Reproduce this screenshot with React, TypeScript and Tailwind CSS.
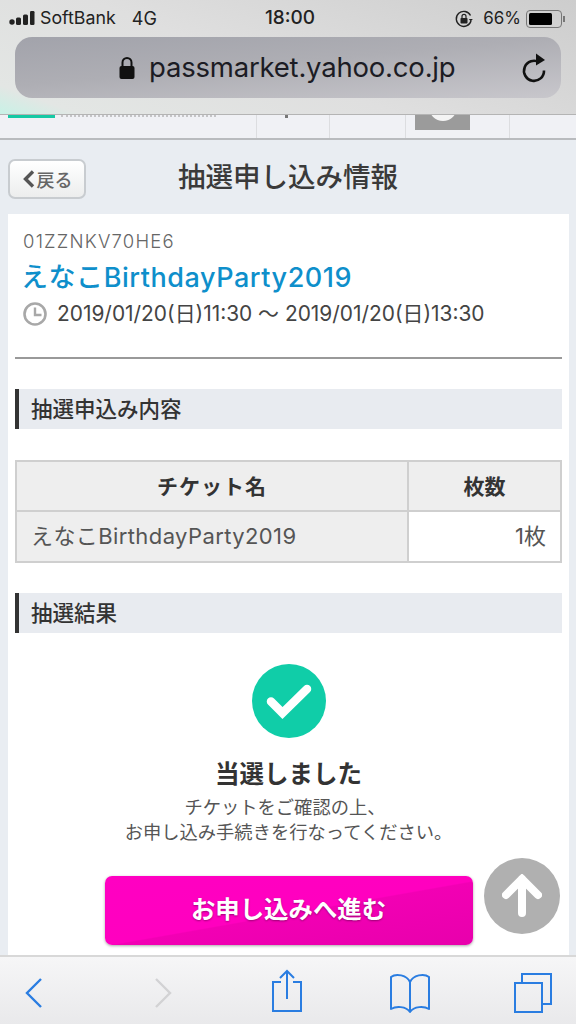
import React from "react";

const jp = "font-['Noto_Sans_CJK_JP','Noto_Sans',sans-serif]";
const latin = "font-['Inter','Noto_Sans_CJK_JP',sans-serif]";

function Section({ title }: { title: string }) {
  return (
    <div className="h-10 bg-[#e8ebf0] border-l-4 border-[#333] flex items-center pl-[12px] pb-[3px] text-[21.5px] font-medium text-[#333] leading-none">
      {title}
    </div>
  );
}

export default function App() {
  return (
    <div className={`${jp} relative w-[576px] h-[1024px] overflow-hidden flex flex-col bg-[#e9edf2]`}>
      {/* Browser top bar */}
      <div className="h-[115px] shrink-0 flex flex-col border-b border-[#b4b4b4] bg-[linear-gradient(20deg,#c8f2e6_0%,#e3e6e4_9%,#dfdfdf_45%,#cdcdcd_100%)]">
        <div className="h-[37px] flex items-center pl-[9px] pr-[11px] text-[#222] font-['Inter',sans-serif] shrink-0">
          <div className="flex items-center flex-1">
            <svg width="26" height="18" viewBox="0 0 26 18" className="mr-[5px]">
              <circle cx="3" cy="12" r="2.7" fill="#222" />
              <rect x="7" y="7.5" width="5" height="7.5" rx="1.5" fill="#222" />
              <rect x="14" y="4.5" width="5" height="10.5" rx="1.5" fill="#222" />
              <rect x="21" y="1" width="4.5" height="14" rx="1.2" fill="#222" />
            </svg>
            <span className="text-[17.8px]">SoftBank</span>
            <span className="ml-[16px] text-[18px]">4G</span>
          </div>
          <div className="font-medium text-[19px] ml-[6px]">18:00</div>
          <div className="flex items-center flex-1 justify-end">
            <svg width="20" height="20" viewBox="0 0 20 20" className="mr-[9px]">
              <path d="M16.5 6.5A7.5 7.5 0 1 0 17 12" fill="none" stroke="#222" strokeWidth="1.4" />
              <path d="M14.8 10h4l-2 2.4z" fill="#222" />
              <rect x="6.5" y="9" width="7" height="5.5" rx="0.8" fill="#222" />
              <path d="M8 9V7.4a2 2 0 0 1 4 0V9" fill="none" stroke="#222" strokeWidth="1.2" />
            </svg>
            <span className="text-[17px] mr-[5px]">66%</span>
            <div className="w-[36px] h-[18px] rounded-[4px] border border-[#777] p-[2px] flex">
              <div className="w-[23px] bg-black rounded-[1.5px]" />
            </div>
            <div className="w-[2px] h-[6px] bg-[#777] ml-[1px]" />
          </div>
        </div>
        <div className="mx-[15px] h-[61px] rounded-[17px] bg-[linear-gradient(175deg,#a2a3ab_0%,#aeaeb4_45%,#c8c7cc_100%)] flex items-center relative">
          <div className="flex items-center ml-[103px]">
            <svg width="18" height="24" viewBox="0 0 18 24" className="mr-[13px]">
              <rect x="1.5" y="10" width="15" height="13" rx="2" fill="#111" />
              <path d="M4.5 11V6.5a4.5 4.5 0 0 1 9 0V11" fill="none" stroke="#111" strokeWidth="2" />
            </svg>
            <span className="text-[27.5px] text-[#1c1c24] font-['Inter',sans-serif] tracking-[-0.2px] leading-none">passmarket.yahoo.co.jp</span>
          </div>
          <svg width="26" height="32" viewBox="0 0 26 32" className="absolute right-[14px] top-[15px]">
            <path d="M18.5 10.5A10 10 0 1 0 23 18.5" fill="none" stroke="#111" strokeWidth="2.6" />
            <path d="M15 1.5 24 8l-9 5.5z" fill="#111" />
          </svg>
        </div>
      </div>

      {/* Scrolled-away site header */}
      <div className="h-[25px] shrink-0 flex bg-[#f0f1f5] border-b-2 border-[#b9bbbe]">
        <div className="w-[257px] border-r border-[#dcdde0] flex items-start pl-2 gap-[6px]">
          <div className="w-[47px] h-[3px] bg-[#15c9a4]" />
          <div className="w-[155px] h-[2px] border-t-2 border-dotted border-[#c4c4c6]" />
        </div>
        <div className="w-[73px] border-r border-[#dcdde0] flex justify-center">
          <div className="w-[3px] h-[3px] bg-[#777] -ml-[14px]" />
        </div>
        <div className="w-[76px] border-r border-[#dcdde0]" />
        <div className="w-[104px] border-r border-[#dcdde0] pl-[9px]">
          <div className="w-[55px] h-[15px] bg-[#9b9b9b] flex justify-center overflow-hidden">
            <div className="w-[28px] h-[28px] rounded-full bg-[#f4f4f4] -mt-[22px]" />
          </div>
        </div>
      </div>

      {/* Page title */}
      <div className="h-[74px] shrink-0 relative flex items-center justify-center">
        <button className="absolute left-2 top-[19px] w-[78px] h-[40px] rounded-[7px] border-2 border-[#c8ccd0] bg-[linear-gradient(#ffffff,#eceded)] flex items-center justify-center text-[#666] text-[18px] font-medium">
          <svg width="14" height="20" viewBox="0 0 14 20" className="mr-[1px]">
            <path d="M11 2.5 3.5 10l7.5 7.5" fill="none" stroke="#555" strokeWidth="3.4" />
          </svg>
          戻る
        </button>
        <h1 className="text-[27.5px] font-medium text-[#3a3a3a] -mt-[3px] leading-none">抽選申し込み情報</h1>
      </div>

      {/* Card */}
      <div className="mx-2 w-[561px] flex-1 min-h-0 bg-white px-[7px] pt-[15px] overflow-hidden">
        <div className={`${latin} px-2 text-[18.5px] leading-6 text-[#666] tracking-[1.2px] font-light`}>01ZZNKV70HE6</div>
        <div className={`${latin} pl-[6px] mt-[8px] text-[27px] leading-[34px] text-[#0e8fcb] font-medium tracking-[0.55px] whitespace-nowrap`}>えなこBirthdayParty2019</div>
        <div className={`${latin} px-2 mt-[5px] flex items-center text-[20.9px] leading-7 text-[#444]`}>
          <svg width="24" height="24" viewBox="0 0 24 24" className="mr-[10px] shrink-0">
            <circle cx="12" cy="12" r="10.5" fill="none" stroke="#a8a8a8" strokeWidth="2.6" />
            <path d="M12 5.5V13h6.5" fill="none" stroke="#a8a8a8" strokeWidth="2.4" />
          </svg>
          <span className="whitespace-nowrap">2019/01/20(日)11:30 ～ 2019/01/20(日)13:30</span>
        </div>
        <div className="mt-[29px] h-[2px] bg-[#999]" />
        <div className="mt-[30px]">
          <Section title="抽選申込み内容" />
        </div>
        <table className="mt-[31px] w-full border-collapse border-2 border-[#cfcfcf] text-[21px] table-fixed">
          <tbody>
            <tr className="h-[50px]">
              <th className="w-[392px] bg-[#eeeeee] border-2 border-[#cfcfcf] font-bold text-[#333] tracking-[1px]">チケット名</th>
              <th className="bg-[#eeeeee] border-2 border-[#cfcfcf] font-bold text-[#333]">枚数</th>
            </tr>
            <tr className="h-[51px]">
              <td className={`${latin} bg-[#eeeeee] border-2 border-[#cfcfcf] pl-[14px] text-[22px] tracking-[0.4px] text-[#555]`}>えなこBirthdayParty2019</td>
              <td className={`${latin} bg-white border-2 border-[#cfcfcf] pr-[14px] text-right text-[22px] text-[#555]`}>1枚</td>
            </tr>
          </tbody>
        </table>
        <div className="mt-[30px]">
          <Section title="抽選結果" />
        </div>
        <div className="flex flex-col items-center mt-[31px]">
          <div className="w-[74px] h-[74px] rounded-full bg-[#10cda8] flex items-center justify-center">
            <svg width="48" height="38" viewBox="0 0 48 38">
              <path d="M6 19.5 17.5 31 42 7" fill="none" stroke="#fff" strokeWidth="8.5" strokeLinecap="round" strokeLinejoin="miter" />
            </svg>
          </div>
          <div className="mt-[18px] text-[24.5px] leading-[34px] font-bold text-[#333]">当選しました</div>
          <div className="mt-[4px] text-[18.3px] leading-[25px] text-[#555] text-center whitespace-nowrap">
            <div className="pr-[7px]">チケットをご確認の上、</div>
            <div>お申し込み手続きを行なってください。</div>
          </div>
          <button className="mt-[32px] w-[368px] h-[69px] rounded-[7px] bg-[linear-gradient(170deg,#ff00c2_0%,#ff00bf_52%,#f200b4_53%,#e800ac_100%)] shadow-[0_1px_3px_rgba(0,0,0,0.35)] text-white text-[24.4px] font-bold pb-[4px] [text-shadow:0_1px_2px_rgba(0,0,0,0.35)]">
            お申し込みへ進む
          </button>
        </div>
      </div>

      {/* Back to top floating button */}
      <div className="absolute left-[484px] top-[858px] w-[76px] h-[76px] rounded-full bg-[#b0b0b0] flex items-center justify-center">
        <svg width="40" height="44" viewBox="0 0 40 44">
          <path d="M20 5V39M4 21 20 5l16 16" fill="none" stroke="#fff" strokeWidth="8" strokeLinecap="round" strokeLinejoin="miter" />
        </svg>
      </div>

      {/* Bottom toolbar */}
      <div className="h-[69px] shrink-0 bg-[linear-gradient(#f6f6f7,#e9e9eb)] border-t-2 border-[#d8d8d8] flex items-center relative">
        <svg width="20" height="32" viewBox="0 0 20 32" className="absolute left-[24px] top-[20px]">
          <path d="M17 2 3 16l14 14" fill="none" stroke="#2a7de1" strokeWidth="2.4" />
        </svg>
        <svg width="20" height="32" viewBox="0 0 20 32" className="absolute left-[153px] top-[20px]">
          <path d="M3 2l14 14L3 30" fill="none" stroke="#d2d2d4" strokeWidth="2.4" />
        </svg>
        <svg width="32" height="46" viewBox="0 0 32 46" className="absolute left-[271px] top-[11px]">
          <path d="M10 14H2v29h28V14h-8" fill="none" stroke="#2a7de1" strokeWidth="2" />
          <path d="M16 31V3M9 10l7-7 7 7" fill="none" stroke="#2a7de1" strokeWidth="2" />
        </svg>
        <svg width="42" height="42" viewBox="0 0 42 42" className="absolute left-[389px] top-[15px]">
          <path d="M21 10C18 3 7 1 2 5v32c5-3 15-3 19 3 4-6 14-6 19-3V5c-5-4-16-2-19 5zV40" fill="none" stroke="#2a7de1" strokeWidth="2" strokeLinejoin="round" />
        </svg>
        <svg width="40" height="42" viewBox="0 0 40 42" className="absolute left-[513px] top-[15px]">
          <path d="M9 10V2h29v30h-8" fill="none" stroke="#2a7de1" strokeWidth="2" />
          <rect x="2" y="11" width="27" height="29" fill="none" stroke="#2a7de1" strokeWidth="2" />
        </svg>
      </div>
    </div>
  );
}
